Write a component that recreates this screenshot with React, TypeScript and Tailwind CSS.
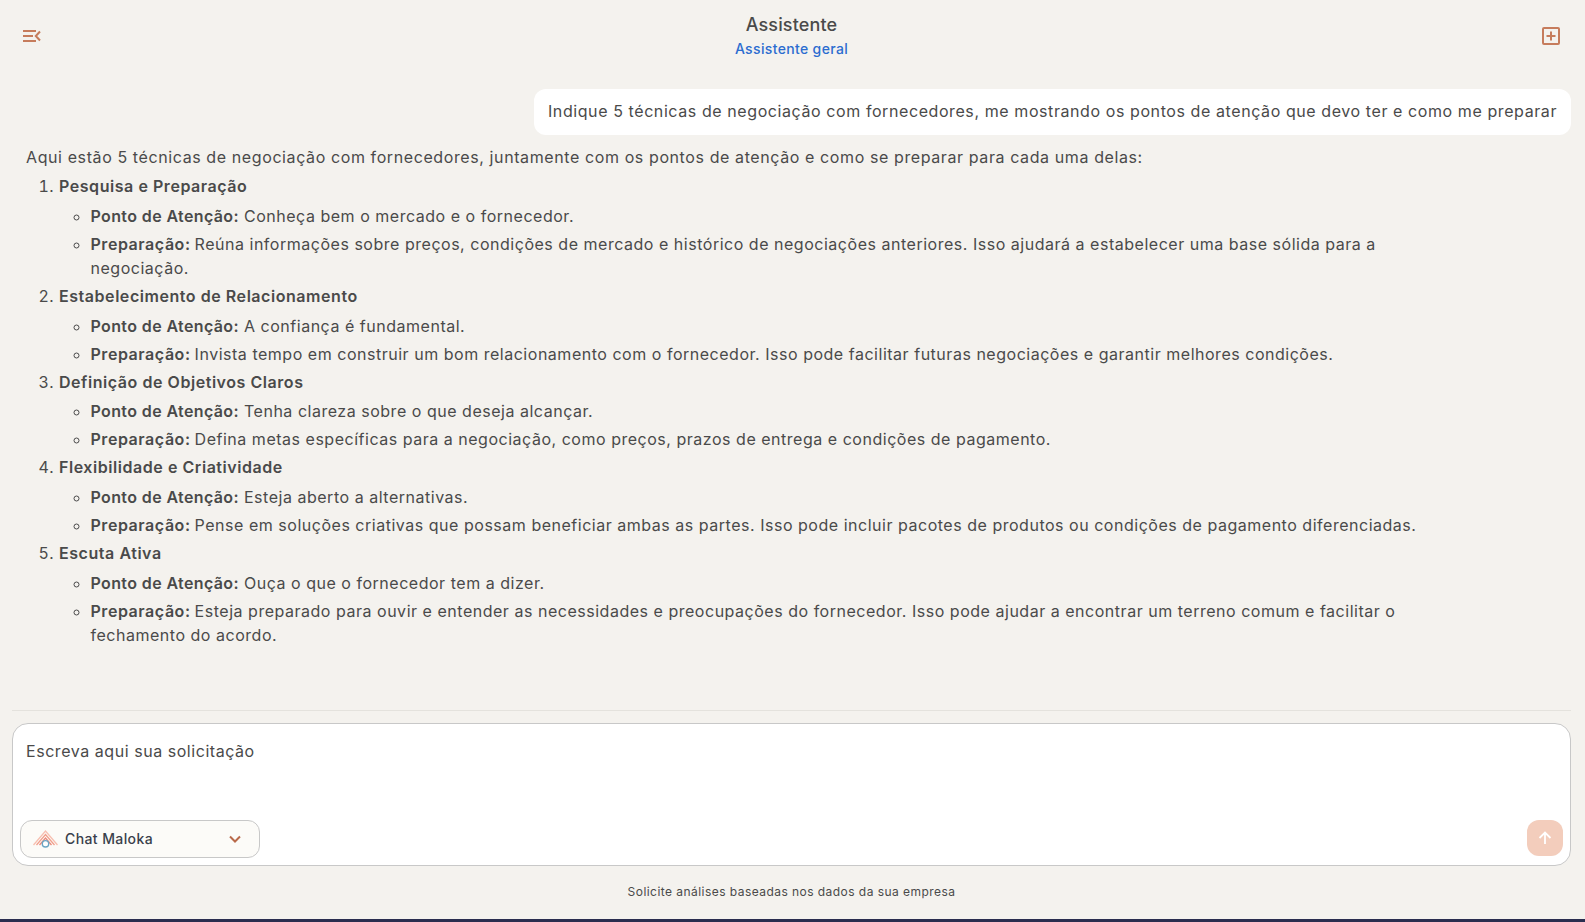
const items = [
  { t: "Pesquisa e Preparação", a: "Conheça bem o mercado e o fornecedor.", p: "Reúna informações sobre preços, condições de mercado e histórico de negociações anteriores. Isso ajudará a estabelecer uma base sólida para a negociação." },
  { t: "Estabelecimento de Relacionamento", a: "A confiança é fundamental.", p: "Invista tempo em construir um bom relacionamento com o fornecedor. Isso pode facilitar futuras negociações e garantir melhores condições." },
  { t: "Definição de Objetivos Claros", a: "Tenha clareza sobre o que deseja alcançar.", p: "Defina metas específicas para a negociação, como preços, prazos de entrega e condições de pagamento." },
  { t: "Flexibilidade e Criatividade", a: "Esteja aberto a alternativas.", p: "Pense em soluções criativas que possam beneficiar ambas as partes. Isso pode incluir pacotes de produtos ou condições de pagamento diferenciadas." },
  { t: "Escuta Ativa", a: "Ouça o que o fornecedor tem a dizer.", p: "Esteja preparado para ouvir e entender as necessidades e preocupações do fornecedor. Isso pode ajudar a encontrar um terreno comum e facilitar o fechamento do acordo." },
];

export default function App() {
  return (
    <div className="flex h-[922px] flex-col overflow-hidden bg-[#f4f2ee] font-['Inter',sans-serif] text-[#4a4a4a] tracking-[0.55px]">
      <header className="flex h-[70px] shrink-0 items-center justify-between pr-[25px] pl-[22px]">
        <svg width="19" height="14" viewBox="0 0 19 14" fill="none" stroke="#c67c5c" strokeWidth="2" className="mt-[2px]">
          <path d="M1 2h13M1 7h10M1 12h13" />
          <path d="M18 2.500 13.800 7l4.200 4.500" />
        </svg>
        <div className="flex flex-col items-center">
          <div className="text-[18px] leading-[28px] font-medium tracking-[0.15px]">Assistente</div>
          <div className="text-[14px] leading-[20px] font-medium tracking-[0.35px] text-[#2b6cd0]">Assistente geral</div>
        </div>
        <svg width="18" height="18" viewBox="0 0 18 18" fill="none" stroke="#c67c5c" strokeWidth="2" className="mt-[2px]">
          <rect x="1" y="1" width="16" height="16" rx="1" />
          <path d="M9 4.500v9M4.500 9h9" />
        </svg>
      </header>

      <main className="flex min-h-0 flex-1 flex-col pr-[14px] pl-[12px]">
        <div className="flex justify-end pt-[19px]">
          <div className="flex h-[46px] items-center rounded-xl bg-white px-[14px] pb-[2px] text-[16px] tracking-[0.585px]">
            Indique 5 técnicas de negociação com fornecedores, me mostrando os pontos de atenção que devo ter e como me preparar
          </div>
        </div>
        <div className="mt-[10px] pl-[14px] text-[16px] leading-[24px]">
          <p className="tracking-[0.6px]">Aqui estão 5 técnicas de negociação com fornecedores, juntamente com os pontos de atenção e como se preparar para cada uma delas:</p>
          <ol className="mt-[5px] w-[1440px] list-decimal pl-[33px]">
            {items.map((it) => (
              <li key={it.t} className="mb-[4px]">
                <strong className="font-semibold">{it.t}</strong>
                <ul className="mt-[5.75px] list-[circle] pl-[31.5px] tracking-[0.52px]">
                  <li className="mb-[4px]"><strong className="font-semibold tracking-[0.38px]">Ponto de Atenção:</strong> {it.a}</li>
                  <li><strong className="mr-[-1px] font-semibold tracking-[0.55px]">Preparação:</strong> {it.p}</li>
                </ul>
              </li>
            ))}
          </ol>
        </div>
        <div className="mt-auto border-t border-[#e4e2dd] pt-[12px]">
          <div className="flex h-[143px] flex-col justify-between rounded-2xl border border-[#c8c8c8] bg-white pr-[7px] pb-[7px] pl-[7px]">
            <div className="pt-[15px] pl-[6px] text-[16px] leading-[24px]">Escreva aqui sua solicitação</div>
            <div className="flex items-end justify-between">
              <button className="flex h-[38px] w-[240px] items-center rounded-xl border border-[#c8c8c8] bg-[#fcfbf8] pr-[18px] pb-[2px] pl-[12px] text-[14px] font-medium tracking-[0.4px] text-[#3a3f4b]">
                <svg width="25" height="18" viewBox="0 0 25 18" fill="none" className="mt-[2px] mr-[7px] shrink-0">
                  <path d="M0.500 15 12.500 1 24.500 15" stroke="#f7bfb0" strokeWidth="1.300" />
                  <path d="M3.500 15 12.500 4.500 21.500 15" stroke="#f29f8c" strokeWidth="1.300" />
                  <path d="M6.500 15 12.500 8 18.500 15" stroke="#e9897a" strokeWidth="1.300" />
                  <circle cx="12.500" cy="13.800" r="3.200" fill="#fff" stroke="#6ba5c4" strokeWidth="1.400" />
                </svg>
                <span>Chat Maloka</span>
                <svg width="12" height="8" viewBox="0 0 12 8" fill="none" stroke="#b9694a" strokeWidth="2" className="mt-[2px] ml-auto">
                  <path d="m1 1.500 5 5 5-5" />
                </svg>
              </button>
              <button className="mb-[2px] flex h-[36px] w-[36px] items-center justify-center rounded-xl bg-[#f3cdbc]">
                <svg width="14" height="14" viewBox="0 0 14 14" fill="none" stroke="#fff" strokeWidth="1.800">
                  <path d="M7 13V1.500M1.500 7 7 1.500 12.500 7" />
                </svg>
              </button>
            </div>
          </div>
        </div>
        <div className="flex h-[53px] shrink-0 items-center justify-center pb-[2px] text-[12px] leading-[16px] tracking-[0.45px]">Solicite análises baseadas nos dados da sua empresa</div>
      </main>
      <div className="h-[3px] shrink-0 bg-[#2a2d4f]" />
    </div>
  );
}
